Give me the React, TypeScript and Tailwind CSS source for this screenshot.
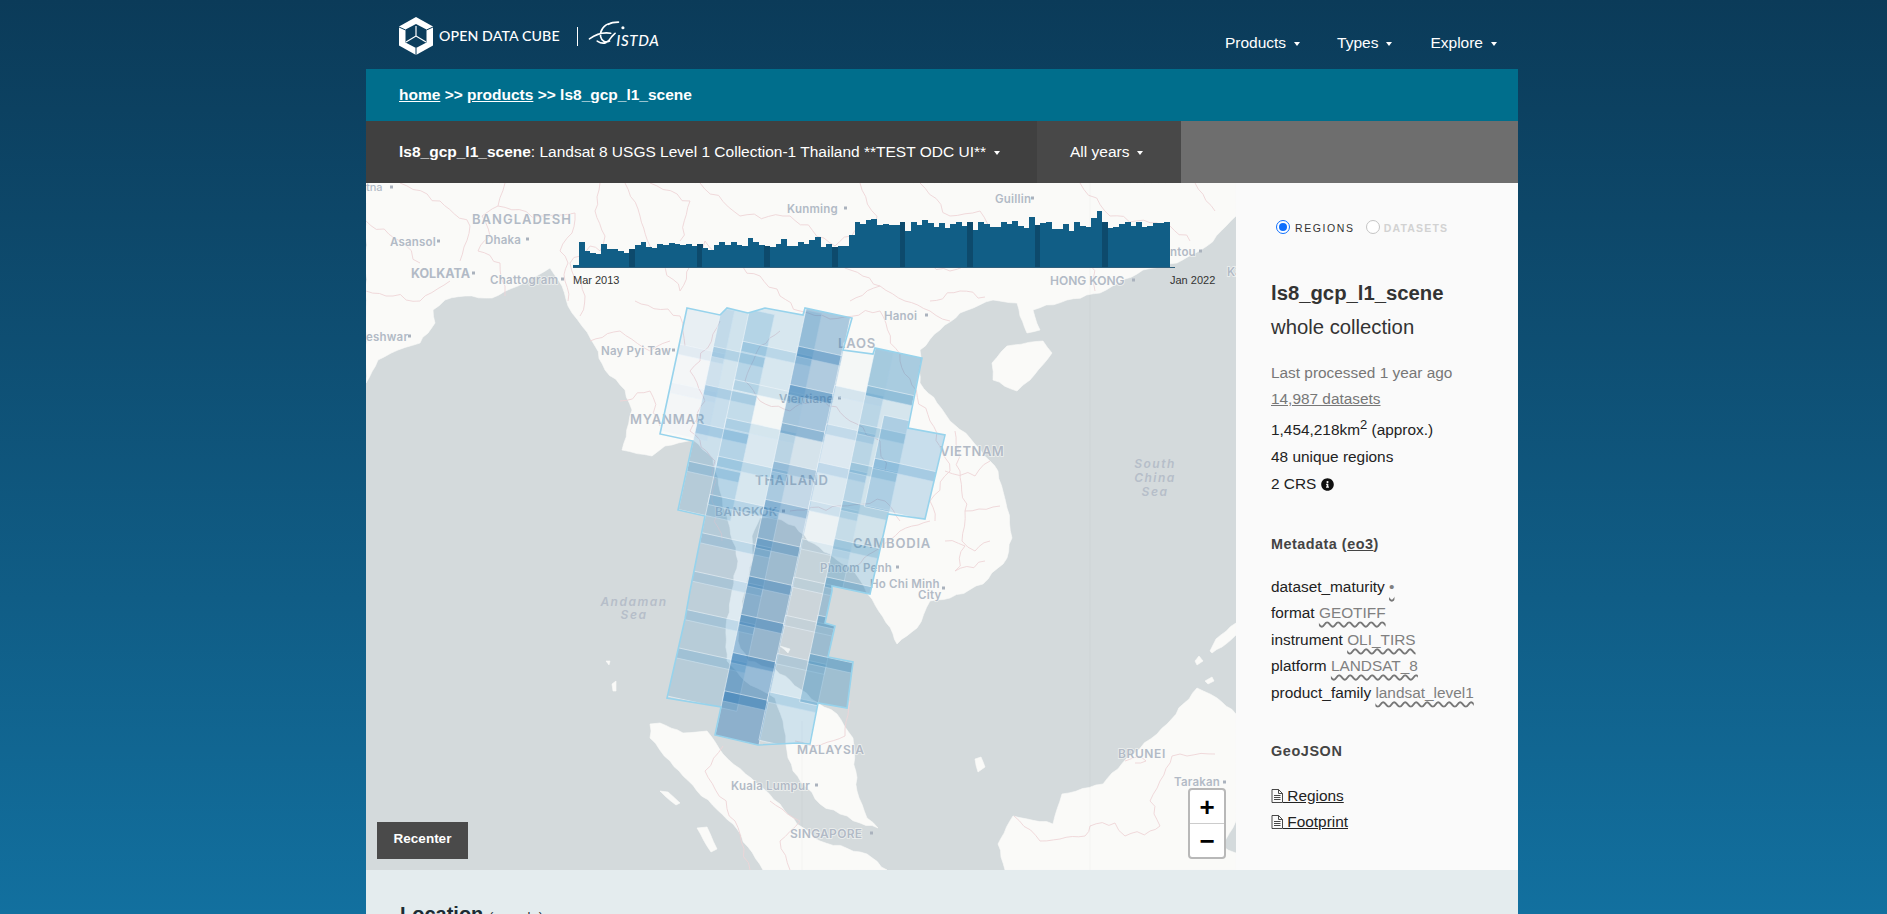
import React from "react";

const topsA = [245,177,204,210,213,183,198,198,204,211,198,187,177,193,195,184,186,181,184,186,183,188,183,196,201,187,177,187,178,185,189,165,178,185,190,192,184,168,189,189,178,182,170,162,192,184,191,189,189,155,117];
const topsB = [122,111,108,125,123,125,125,117,143,117,125,111,120,132,120,135,123,117,129,117,141,117,123,132,132,117,123,114,129,135,102,126,120,117,138,138,123,144,117,129,132,105,84,117,135,132,123,117,129,117,132,129,120,120,117];
const bars = [...topsA, ...topsB].map((t) => (252 - t) / 3);
const darkFrom = [10, 22, 34, 46, 58, 70, 82, 94];

const O = { x: 687, y: 307 };
const pt = (u: number, v: number) => `${(O.x + u - 0.214 * v).toFixed(1)},${(O.y + 0.22 * u + v).toFixed(1)}`;
const quad = (u0: number, u1: number, v0: number, v1: number) => [pt(u0, v0), pt(u1, v0), pt(u1, v1), pt(u0, v1)].join(" ");

function wiggleSeg(a: number[], b: number[], amp: number, seed: number): string[] {
  const dx = b[0] - a[0];
  const dy = b[1] - a[1];
  const len = Math.hypot(dx, dy) || 1;
  const n = Math.max(1, Math.round(len / 7));
  const out: string[] = [];
  for (let i = 1; i <= n; i++) {
    const t = i / n;
    const off = i === n ? 0 : amp * Math.sin(seed * 12.9 + i * 2.7) * Math.cos(seed * 3.1 + i * 1.3);
    out.push(`${(a[0] + dx * t - (dy / len) * off).toFixed(1)},${(a[1] + dy * t + (dx / len) * off).toFixed(1)}`);
  }
  return out;
}
function wigglePoly(p: string, amp: number) {
  const pts = p.split(" ").map((s) => s.split(",").map(Number));
  const out: string[] = [];
  pts.forEach((q, i) => {
    const n = pts[(i + 1) % pts.length];
    const onFrame = (q[0] >= 1236 && n[0] >= 1236) || (q[1] <= 182 && n[1] <= 182) || (q[1] >= 869 && n[1] >= 869);
    out.push(...wiggleSeg(q, n, onFrame ? 0 : amp, i + 1));
  });
  return out.join(" ");
}
function wiggleLine(d: string, amp: number) {
  return d
    .split("M")
    .filter((s) => s.trim())
    .map((sub, si) => {
      const pts = sub.split("L").map((s) => s.trim().split(/\s+/).map(Number));
      let r = `M${pts[0][0]} ${pts[0][1]}`;
      for (let i = 0; i + 1 < pts.length; i++) {
        r += wiggleSeg(pts[i], pts[i + 1], amp, i + si * 5 + 2).map((s) => " L" + s.replace(",", " ")).join("");
      }
      return r;
    })
    .join(" ");
}

type Path = { u: [number, number]; b: number; a: number[]; c: string };
const paths: Path[] = [
  { u: [0, 46], b: 41, a: [0.1, 0.03, 0.03], c: "#4a8fd0" },
  { u: [33, 85], b: 36, a: [0.22, 0.2, 0.26, 0.24, 0.2], c: "#3a90c8" },
  { u: [60, 130], b: 25, a: [0.18, 0.18, 0.03, 0.16, 0.18, 0.2, 0.15, 0.14, 0.18, 0.18], c: "#3a90c8" },
  { u: [114, 158], b: 18, a: [0.38, 0.36, 0.4, 0.18, 0.26, 0.28, 0.32, 0.36, 0.36, 0.48, 0.42], c: "#2b78b4" },
  { u: [157, 206], b: 48, a: [0.03, 0.17, 0.15, 0.17, 0.07, 0.09, 0.05, 0.05, 0.18, 0.22], c: "#3a90c8" },
  { u: [188, 235], b: 41, a: [0.4, 0.18, 0.2, 0.2, 0.2, 0.25, 0.28, 0.3, 0.32], c: "#2f86bb" },
  { u: [210, 272], b: 109, a: [0.26, 0.24], c: "#3a90c8" },
];

const outline = "687,307 720,314 727,307 748,312 765,307 803,314 805,307 852,317 843,349 873,353 875,347 922,357 908,427 945,434 925,518 888,513 870,593 832,585 832,590 825,622 835,625 828,656 853,661 847,707 818,702 810,743 798,742 758,744 715,734 721,706 667,697 685,618 690,590 705,515 678,509 693,440 660,433";

const land = [
  "366,182 1236,182 1236,215 1207,245 1177,262 1143,269 1100,292 1067,299 1033,309 1040,329 1027,332 1020,315 1017,302 993,299 960,312 940,329 920,349 920,382 937,402 950,420 970,437 990,460 998,470 1007,507 1012,537 1007,557 983,583 950,597 930,600 917,627 897,643 893,633 872,598 855,572 830,553 808,540 795,525 775,517 760,517 752,535 752,560 742,600 738,640 748,660 775,668 800,688 818,702 837,713 853,737 857,790 867,817 878,827 860,822 840,813 820,803 793,770 787,750 783,720 775,697 745,680 727,660 726,625 732,590 738,560 728,520 720,490 713,457 693,439 665,445 652,455 622,449 632,409 625,389 605,369 595,345 582,325 568,305 562,285 550,267 518,285 492,297 465,295 445,299 433,309 435,322 420,342 398,349 378,359 366,382",
  "992,362 1007,345 1043,340 1052,352 1030,379 1017,390 993,379",
  "650,723 660,722 683,732 707,730 723,753 757,783 780,803 797,823 820,840 867,853 887,869 763,869 733,823 697,790 670,760 650,737",
  "1005,869 998,843 1013,815 1053,823 1062,793 1103,783 1127,757 1157,733 1167,723 1197,687 1217,697 1236,713 1236,820 1222,845 1236,852 1236,869",
  "1210,650 1216,638 1236,622 1236,634 1222,646 1212,652",
  "660,790 668,791 680,802 676,804",
  "697,827 707,826 717,848 711,851",
  "975,758 981,756 985,766 978,771",
  "1195,660 1199,655 1203,660 1197,664",
  "1205,680 1212,676 1214,680 1208,683",
  "612,683 616,680 616,690 613,690",
  "606,660 610,660 609,664",
  "780,645 790,648 788,652",
];

const borders = [
  "M505 182 L498 205 L482 215 L490 235 L478 250 L500 262 L505 285 L505 295",
  "M498 205 L540 215 L575 212 L572 232 L560 250 L568 262 L565 280 L568 300",
  "M600 182 L595 210 L605 235 L600 250 L590 245 L570 262 L585 295 L580 315",
  "M625 182 L640 215 L650 245 L680 290 L690 265 L705 240 L730 262 L760 275 L780 295 L800 310",
  "M720 320 L700 360 L690 370 L705 400 L690 430 L715 460 L712 500 L722 540",
  "M780 330 L760 345 L745 380 L760 400 L790 410 L820 395 L850 420 L880 440 L885 470",
  "M800 310 L830 318 L880 310 L900 360 L930 420 L950 470 L930 500 L935 520",
  "M790 510 L840 505 L885 500 L900 520",
  "M850 570 L875 550 L900 530 L930 520",
  "M850 300 L880 285 L905 300 L930 310 L950 320",
  "M795 740 L815 745 L845 735 L850 700",
  "M723 745 L705 770 L735 820 L750 869",
  "M790 869 L780 840 L800 820 L770 800",
  "M1014 815 L1040 840 L1060 838 L1085 835 L1090 825 L1115 822 L1125 835 L1150 830 L1160 825 L1150 800 L1160 780 L1172 755 L1180 753 L1215 753",
  "M1125 760 L1140 755 L1146 760 L1135 762",
  "M955 430 L960 470 L965 510 L962 540 L975 550 L990 540 M945 470 L975 475 L990 460 M965 510 L1000 505 M945 540 L965 545 L955 570 L985 560",
  "M400 182 L440 200 L470 225 L460 260 M366 220 L400 240 L420 262 M366 290 L420 300 L450 280",
  "M650 182 L690 200 L680 240 M700 182 L740 215 L790 215 L835 245 L860 225 M860 182 L880 230 L840 262 L880 285",
  "M920 182 L950 215 L980 210 L1000 250 L1060 262 L1090 250 L1095 290 M1080 182 L1110 215 L1170 225 L1190 240 M1195 182 L1215 210",
  "M905 255 L950 270 L985 258 M930 300 L960 290 L985 296",
  "M590 340 L620 330 L650 350 L670 340 M620 400 L650 390 L660 425 M635 300 L680 315 L685 345",
];

type Lbl = [string, number, number, number, number?, number?];
const labels: Lbl[] = [
  ["tna", 366, 190, 11],
  ["BANGLADESH", 472, 223, 13, 1, 600],
  ["Dhaka", 485, 243, 11.5, 0.2, 600],
  ["Asansol", 390, 245, 11.5, 0.2, 600],
  ["KOLKATA", 411, 277, 12.5, 0, 700],
  ["Chattogram", 490, 283, 11.5, 0.3, 600],
  ["eshwar", 366, 340, 11.5, 0.2, 600],
  ["Kunming", 787, 212, 11.5, 0.2, 600],
  ["Guillin", 995, 202, 11.5, 0.2, 600],
  ["ntou", 1170, 255, 11.5, 0.2, 600],
  ["HONG KONG", 1050, 284, 12, 0, 600],
  ["Ka", 1227, 275, 11.5, 0, 600],
  ["Hanoi", 884, 319, 11.5, 0.2, 600],
  ["Nay Pyi Taw", 601, 354, 11.5, 0.2, 600],
  ["MYANMAR", 630, 423, 13, 0.8, 600],
  ["LAOS", 838, 347, 13, 0.8, 600],
  ["Vientiane", 779, 402, 11.5, 0.2, 600],
  ["VIETNAM", 940, 455, 13, 0.5, 600],
  ["THAILAND", 755, 484, 13, 0.8, 600],
  ["BANGKOK", 715, 515, 12, 0.3, 600],
  ["CAMBODIA", 853, 547, 13, 0.8, 600],
  ["Phnom Penh", 820, 571, 11.5, 0.2, 600],
  ["Ho Chi Minh", 870, 587, 11.5, 0.2, 600],
  ["City", 918, 598, 11.5, 0.2, 600],
  ["MALAYSIA", 797, 753, 12, 0.6, 600],
  ["Kuala Lumpur", 731, 789, 11.5, 0.2, 600],
  ["SINGAPORE", 790, 837, 12, 0.3, 600],
  ["BRUNEI", 1118, 757, 12, 0.6, 600],
  ["Tarakan", 1174, 785, 11.5, 0.2, 600],
];
const dots: [number, number][] = [[390,186],[526,238],[437,240],[472,272],[561,278],[408,335],[844,207],[1031,197],[1199,250],[1132,279],[925,314],[672,349],[838,397],[782,510],[896,566],[942,587],[815,784],[870,832],[1223,781]];
const seas: [string, number, number][] = [["Andaman", 634, 605], ["Sea", 634, 618], ["South", 1155, 467], ["China", 1155, 481], ["Sea", 1155, 495]];

function Caret() {
  return <span className="ml-[8px] inline-block h-0 w-0 border-x-[3px] border-t-[4px] border-x-transparent border-t-white align-[2px]" />;
}

function Cube() {
  return (
    <svg viewBox="0 0 34 38" className="h-[38px] w-[34px] shrink-0">
      <path d="M17 0 L34 9.5 V28.5 L17 38 L0 28.5 V9.5 Z" fill="#fff" />
      <path d="M17 7 L27.5 12.5 L27.5 25.5 L17 31 L6.5 25.5 L6.5 12.5 Z" fill="#0b3d5c" />
      <path d="M17 9 V19 M17 19 L7 25 M17 19 L27 25" stroke="#fff" strokeWidth="1.2" fill="none" />
      <path d="M0 10 L6.5 13 M34 10 L27.5 13 M17 38 V31" stroke="#0b3d5c" strokeWidth="1" fill="none" />
    </svg>
  );
}

function Gistda() {
  return (
    <svg viewBox="0 0 72 26" className="h-[29px] w-[81px] shrink-0">
      <path d="M1 16 C8 11 14 10 20 11 M8 18 C14 22 18 19 21 14 L24 11 M20 2 C14 3 10 9 11 14 C12 18 15 20 19 18 M18 3 C21 1 24 1 27 1" stroke="#fff" strokeWidth="1.5" fill="none" strokeLinecap="round" />
      <circle cx="31" cy="6" r="1.4" fill="#fff" />
      <text x="25" y="22" fill="#fff" fontSize="13.5" fontStyle="italic" fontWeight="500" letterSpacing="0.6" fontFamily="Lato, sans-serif">ISTDA</text>
    </svg>
  );
}

function DocIcon() {
  return (
    <svg viewBox="0 0 12 14" className="inline-block h-[14px] w-[12px] align-[-2px]" fill="none" stroke="#333" strokeWidth="0.9">
      <path d="M1 .5 H7.5 L11.5 4.5 V13.5 H1 Z M7.5 .5 V4.5 H11.5" />
      <path d="M3 6.5 H9.5 M3 8.5 H9.5 M3 10.5 H9.5" />
    </svg>
  );
}

function MapArt() {
  return (
    <svg viewBox="366 182 870 687" className="block h-[687px] w-[870px]">
      <defs>
        <clipPath id="scenes"><polygon points={outline} /></clipPath>
      </defs>
      <rect x="366" y="182" width="870" height="687" fill="#d4dadc" />
      <g className="blur-[0.4px]">
        {land.map((p, i) => <polygon key={i} points={wigglePoly(p, 1.3)} fill="#fafaf8" stroke="#fafaf8" strokeWidth="0.6" strokeLinejoin="round" />)}
        {borders.map((d, i) => <path key={i} d={wiggleLine(d, 3)} fill="none" stroke="#eed5d7" strokeWidth="0.9" strokeLinejoin="round" />)}
      </g>
      <path d="M1090 182 V869 M802 720 V869" stroke="#000" strokeOpacity="0.025" />
      {labels.map(([t, x, y, s, ls = 0, w = 500], i) => (
        <text key={i} x={x} y={y} fontSize={s} letterSpacing={ls} fontWeight={w} fill="#b2bac6" stroke="#fafaf8" strokeOpacity="0.7" strokeWidth="1.5" className="[font-family:Inter,sans-serif] [paint-order:stroke]">{t}</text>
      ))}
      {seas.map(([t, x, y], i) => (
        <text key={i} x={x} y={y} fontSize="12" letterSpacing="1.5" fontStyle="italic" fontWeight="600" textAnchor="middle" fill="#b6bec9" className="[font-family:Inter,sans-serif]">{t}</text>
      ))}
      {dots.map(([x, y], i) => <rect key={i} x={x} y={y - 1.5} width="3" height="3" fill="#aab2bd" />)}
      <g clipPath="url(#scenes)">
        {paths.flatMap((p, i) =>
          p.a.map((a, k) => {
            const v0 = k === 0 ? p.b - 48 : p.b + 38.3 * (k - 1) - 5;
            const v1 = p.b + 38.3 * k + 5;
            return <polygon key={`${i}-${k}`} points={quad(p.u[0], p.u[1], v0, v1)} fill={p.c} fillOpacity={a} stroke="#f2f8fb" strokeOpacity="0.7" strokeWidth="0.8" />;
          })
        )}
      </g>
      <polygon points={outline} fill="none" stroke="#97d3ec" strokeWidth="1.6" />
    </svg>
  );
}

function Histogram() {
  return (
    <svg viewBox="0 0 604 60" className="block h-[60px] w-[604px]" shapeRendering="crispEdges">
      {bars.map((h, i) => (
        <rect key={i} x={i * 5.63} y={56 - h} width="5.9" height={h} fill={darkFrom.includes(i) ? "#0d4a6c" : "#115e86"} />
      ))}
      <rect x="0" y="55.5" width="602" height="1" fill="#2f5f7c" />
    </svg>
  );
}

function Meta({ k, v }: { k: string; v: string }) {
  return (
    <div className="h-[26.4px] leading-[26px] text-[#222]">
      {k} <span className="text-[#808080] underline decoration-wavy decoration-[#777] decoration-[1.5px] underline-offset-[3px]">{v}</span>
    </div>
  );
}

export default function App() {
  return (
    <div className="h-[914px] w-full overflow-hidden bg-linear-to-b from-[#0b3b59] to-[#12709f] [font-family:'Liberation_Sans',Arial,sans-serif]">
      <div className="ml-[366px] w-[1152px]">
        <header className="flex h-[69px] items-start justify-between pl-[33px] pr-[21px]">
          <div className="flex items-center pt-[17px]">
            <Cube />
            <span className="ml-[6px] text-[14.2px] font-medium tracking-[0.1px] text-white [font-family:Lato,sans-serif]">OPEN DATA CUBE</span>
            <span className="ml-[17px] h-[19px] w-px bg-white" />
            <span className="ml-[10px] -mt-[2px]"><Gistda /></span>
          </div>
          <nav className="flex pt-[34px] text-[15.5px] leading-[18px] text-white">
            <span>Products<Caret /></span>
            <span className="ml-[37px]">Types<Caret /></span>
            <span className="ml-[38px]">Explore<Caret /></span>
          </nav>
        </header>

        <div className="flex h-[52px] items-center bg-[#006e8c] pl-[33px] text-[15.5px] font-bold text-white">
          <span className="underline">home</span>
          <span>&nbsp;&gt;&gt;&nbsp;</span>
          <span className="underline">products</span>
          <span>&nbsp;&gt;&gt; ls8_gcp_l1_scene</span>
        </div>

        <div className="flex h-[62px] text-[15.5px] text-white">
          <div className="flex w-[671px] items-center bg-[#404040] pl-[33px]">
            <span><b>ls8_gcp_l1_scene</b>: Landsat 8 USGS Level 1 Collection-1 Thailand **TEST ODC UI**<Caret /></span>
          </div>
          <div className="flex w-[144px] items-center bg-[#484848] pl-[33px]">
            <span>All years<Caret /></span>
          </div>
          <div className="flex-1 bg-[#6e6e6e]" />
        </div>

        <div className="flex h-[687px]">
          <div className="relative h-[687px] w-[870px]">
            <MapArt />
            <div className="absolute left-[207px] top-[28px]"><Histogram /></div>
            <span className="absolute left-[207px] top-[90px] text-[11px] leading-[14px] text-[#333]">Mar 2013</span>
            <span className="absolute left-[804px] top-[90px] text-[11px] leading-[14px] text-[#333]">Jan 2022</span>
            <div className="absolute left-[11px] top-[639px] flex h-[37px] w-[91px] items-center justify-center bg-[#4a4a4a] pb-[2px] text-[13.5px] font-bold text-white">Recenter</div>
            <div className="absolute left-[822px] top-[605px] w-[38px] rounded-[4px] border-2 border-[#b8b8b8] bg-white text-black">
              <div className="flex h-[34px] items-center justify-center border-b border-[#ccc] text-[26px] font-bold leading-none">+</div>
              <div className="flex h-[33px] items-center justify-center text-[26px] font-bold leading-none">−</div>
            </div>
          </div>

          <aside className="flex-1 bg-[#fafafa] pl-[35px] text-[15.4px] text-[#222]">
            <div className="mt-[37px] flex h-[14px] items-center pl-[5px]">
              <span className="h-[14px] w-[14px] rounded-full border-[1.5px] border-[#0d6efd] bg-white p-[2px]"><span className="block h-full w-full rounded-full bg-[#0d6efd]" /></span>
              <span className="ml-[5px] mt-[3px] text-[10.5px] tracking-[1.6px] text-[#333]">REGIONS</span>
              <span className="ml-[11px] h-[14px] w-[14px] rounded-full border border-[#c4c4c4] bg-white" />
              <span className="ml-[4px] mt-[3px] text-[10.5px] font-bold tracking-[1.2px] text-[#d2d2d2]">DATASETS</span>
            </div>
            <h2 className="mt-[47px] text-[20.3px] font-bold leading-[24px] text-[#333]">ls8_gcp_l1_scene</h2>
            <div className="mt-[10px] text-[20.3px] leading-[24px] text-[#333]">whole collection</div>
            <div className="mt-[25px] leading-[18px] text-[#777]">Last processed 1 year ago</div>
            <div className="mt-[8px] leading-[18px] text-[#777] underline">14,987 datasets</div>
            <div className="mt-[10px] leading-[24px]">1,454,218km<sup className="text-[13px]">2</sup> (approx.)</div>
            <div className="mt-[3px] leading-[24px]">48 unique regions</div>
            <div className="mt-[3px] flex items-center leading-[24px]">2 CRS
              <svg viewBox="0 0 512 512" className="ml-[5px] h-[13px] w-[13px]" fill="#111">
                <path d="M256 8C119 8 8 119 8 256s111 248 248 248 248-111 248-248S393 8 256 8zm0 110a42 42 0 1 1 0 84 42 42 0 0 1 0-84zm56 254c0 7-5 12-12 12h-88c-7 0-12-5-12-12v-24c0-7 5-12 12-12h12v-64h-12c-7 0-12-5-12-12v-24c0-7 5-12 12-12h64c7 0 12 5 12 12v100h12c7 0 12 5 12 12v24z" />
              </svg>
            </div>
            <div className="mt-[38px] text-[14.4px] font-bold leading-[20px] tracking-[0.5px] text-[#444]">Metadata (<span className="underline">eo3</span>)</div>
            <div className="mt-[20px]">
              <Meta k="dataset_maturity" v="•" />
              <Meta k="format" v="GEOTIFF" />
              <Meta k="instrument" v="OLI_TIRS" />
              <Meta k="platform" v="LANDSAT_8" />
              <Meta k="product_family" v="landsat_level1" />
            </div>
            <div className="mt-[35px] text-[14.4px] font-bold leading-[20px] tracking-[0.6px] text-[#444]">GeoJSON</div>
            <div className="mt-[23px] leading-[24px] underline"><DocIcon /> Regions</div>
            <div className="mt-[2px] leading-[24px] underline"><DocIcon /> Footprint</div>
          </aside>
        </div>

        <section className="h-[200px] bg-[#e4ecee] pl-[34px] pt-[30px]">
          <h3 className="text-[20px] font-bold leading-[28px] text-[#1d2b33]">Location <span className="text-[13px] font-normal tracking-[0.5px]">(sample)</span></h3>
        </section>
      </div>
    </div>
  );
}
